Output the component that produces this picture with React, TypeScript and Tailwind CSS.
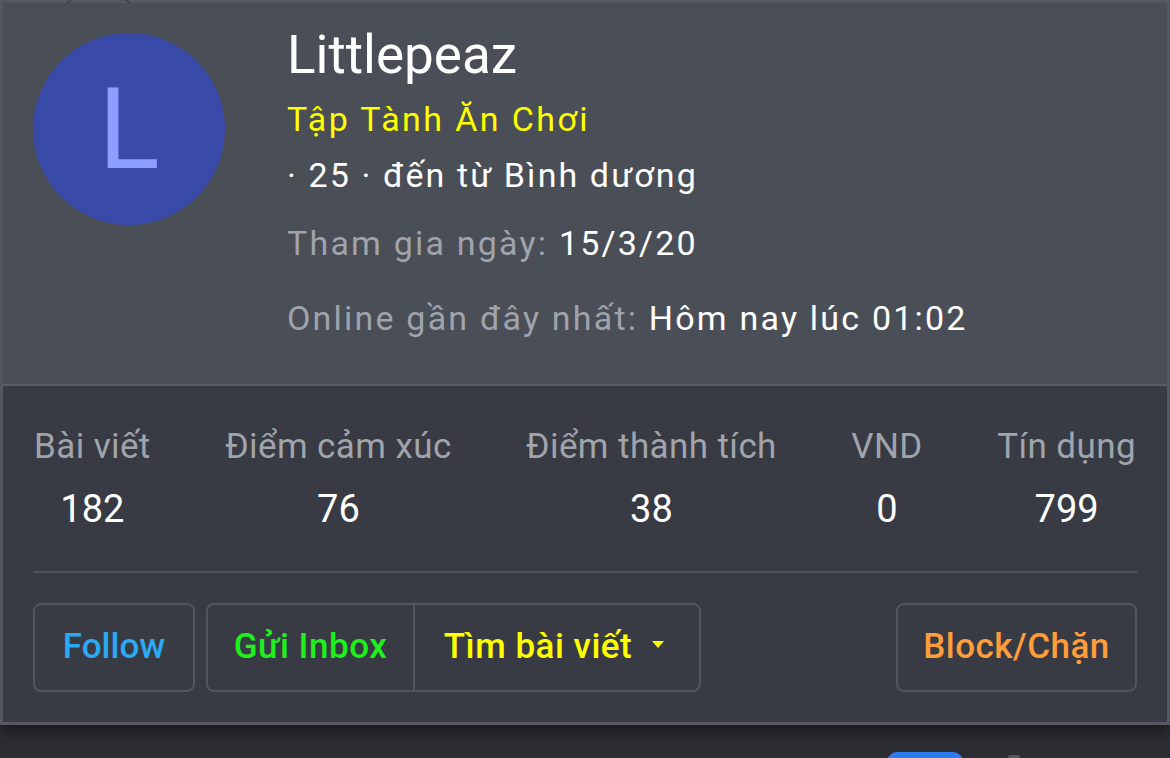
import React from "react";

function Stat({ label, value }: { label: string; value: string }) {
  return (
    <div className="flex flex-col items-center">
      <div className="text-[35px] leading-[40px] tracking-[0.4px] text-[#a0a4ab]">{label}</div>
      <div className="mt-[20px] text-[38px] leading-[44px] text-white">{value}</div>
    </div>
  );
}

export default function App() {
  return (
    <div className="relative w-[1170px] h-[758px] overflow-hidden bg-[#2b2d32] font-['Roboto','Noto_Sans',sans-serif]">
      <svg className="absolute left-0 top-0 z-10" width="200" height="4" viewBox="0 0 200 4">
        <line x1="66" y1="4" x2="71" y2="0" stroke="#3d4047" strokeWidth="1.5" />
        <line x1="126" y1="0" x2="131" y2="4" stroke="#3d4047" strokeWidth="1.5" />
      </svg>
      <div className="border-[3px] border-[#55585f] bg-[#383b43] shadow-[0_6px_14px_rgba(0,0,0,0.45)]">
        <div className="flex h-[383px] border-b-2 border-[#5a5d65] bg-[#4a4e57] pl-[30px]">
          <div className="mt-[30px] flex h-[192px] w-[192px] shrink-0 items-center justify-center rounded-full bg-[#3a4aa8]">
            <span className="text-[114px] leading-none text-[#8c9eff]">L</span>
          </div>
          <div className="ml-[62px] flex flex-col pt-[21px]">
            <div className="text-[53px] leading-[62px] text-white">Littlepeaz</div>
            <div className="mt-[13px] text-[34px] leading-[40px] tracking-[2.4px] text-[#ffff00]">Tập Tành Ăn Chơi</div>
            <div className="mt-[16px] text-[34px] leading-[40px] tracking-[2.1px] text-white">· 25 · đến từ Bình dương</div>
            <div className="mt-[28px] text-[34px] leading-[40px] tracking-[2.2px] text-[#9fa3ab]">
              Tham gia ngày: <span className="text-white">15/3/20</span>
            </div>
            <div className="mt-[35px] text-[34px] leading-[40px] tracking-[2.2px] text-[#9fa3ab]">
              Online gần đây nhất: <span className="text-white">Hôm nay lúc 01:02</span>
            </div>
          </div>
        </div>
        <div className="px-[30px] pt-[41px] pb-[30px]">
          <div className="flex justify-between px-[1px]">
            <Stat label="Bài viết" value="182" />
            <Stat label="Điểm cảm xúc" value="76" />
            <Stat label="Điểm thành tích" value="38" />
            <Stat label="VND" value="0" />
            <Stat label="Tín dụng" value="799" />
          </div>
          <div className="mt-[40px] h-[2px] bg-[#4f5259]" />
          <div className="mt-[30px] flex h-[89px] items-stretch">
            <button className="flex w-[162px] items-center justify-center rounded-[8px] border-2 border-[#52555c] text-[35px] font-medium text-[#2ba9f4]">
              Follow
            </button>
            <div className="ml-[11px] flex rounded-[8px] border-2 border-[#52555c]">
              <button className="flex w-[207px] items-center justify-center border-r-2 border-[#52555c] text-[35px] font-medium tracking-[0.5px] text-[#1df01d]">
                Gửi Inbox
              </button>
              <button className="flex w-[284px] items-center justify-center gap-[20px] pr-[6px] text-[35px] font-medium tracking-[0.5px] text-[#ffff00]">
                <span>Tìm bài viết</span>
                <svg width="12" height="7" viewBox="0 0 12 7" className="-mt-[6px]">
                  <polygon points="0,0 12,0 6,7" fill="#ffff00" />
                </svg>
              </button>
            </div>
            <div className="flex-1" />
            <button className="flex w-[241px] items-center justify-center rounded-[8px] border-2 border-[#52555c] text-[35px] font-medium tracking-[0.5px] text-[#ff9d3a]">
              Block/Chặn
            </button>
          </div>
        </div>
      </div>
      <div className="flex justify-end pr-[150px] pt-[27px]">
        <div className="h-[20px] w-[76px] rounded-t-[10px] bg-[#2f7bf0]" />
        <div className="ml-[45px] mt-[3px] h-[20px] w-[12px] rounded-t-[2px] bg-[#55575c]" />
      </div>
    </div>
  );
}
